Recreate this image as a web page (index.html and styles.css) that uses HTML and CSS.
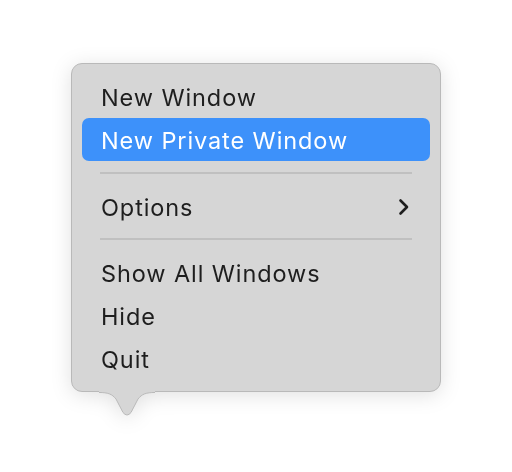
FILE: index.html
```html
<!DOCTYPE html>
<html>
<head>
<meta charset="utf-8">
<link rel="stylesheet" href="styles.css">
</head>
<body>
<div class="stage">
  <div class="popup">
    <div class="menu">
      <div class="item">New Window</div>
      <div class="item active">New Private Window</div>
      <div class="sep"></div>
      <div class="item sub">Options
        <svg class="chev" width="13" height="18" viewBox="0 0 13 18"><path d="M2.5 2.5 L9 9 L2.5 15.5" fill="none" stroke="#1e1e1e" stroke-width="2.6" stroke-linecap="round" stroke-linejoin="round"/></svg>
      </div>
      <div class="sep"></div>
      <div class="item">Show All Windows</div>
      <div class="item">Hide</div>
      <div class="item">Quit</div>
    </div>
    <svg class="tail" width="56" height="26" viewBox="0 0 56 26">
      <path d="M0 0 L0 1.5 C9 1.5 13 3 17 8 L24 21.5 Q28 26.5 32 21.5 L39 8 C43 3 47 1.5 56 1.5 L56 0 Z" fill="#d6d6d6"/>
      <path d="M0 1.5 C9 1.5 13 3 17 8 L24 21.5 Q28 26.5 32 21.5 L39 8 C43 3 47 1.5 56 1.5" fill="none" stroke="#b9b9b9" stroke-width="1"/>
    </svg>
  </div>
</div>
</body>
</html>
```
FILE: styles.css
```css
html, body {
  margin: 0;
  padding: 0;
  background: #ffffff;
}
body {
  width: 512px;
  height: 472px;
  font-family: Inter, "Noto Sans", sans-serif;
}
.stage {
  padding: 63px 0 0 71px;
}
.popup {
  position: relative;
  width: 370px;
  filter: drop-shadow(0 3px 10px rgba(0, 0, 0, 0.12));
}
.menu {
  box-sizing: border-box;
  width: 370px;
  background: #d6d6d6;
  border: 1px solid #b9b9b9;
  border-radius: 11px;
  padding: 11px 10px 11px 10px;
  display: flex;
  flex-direction: column;
}
.item {
  box-sizing: border-box;
  height: 43px;
  display: flex;
  align-items: center;
  justify-content: space-between;
  padding: 2px 19px 0 19px;
  border-radius: 7px;
  font-size: 23.5px;
  color: #1e1e1e;
  letter-spacing: 0.9px;
}
.item.active {
  background: #3d91fa;
  color: #ffffff;
}
.sep {
  height: 23.5px;
  margin: 0 18px;
  display: flex;
  align-items: center;
}
.sep::before {
  content: "";
  flex: 1;
  height: 2px;
  background: #c0c0c0;
}
.chev {
  display: block;
  margin-right: 0;
}
.tail {
  position: absolute;
  left: 28px;
  top: 100%;
  margin-top: -1.5px;
  display: block;
}
```
